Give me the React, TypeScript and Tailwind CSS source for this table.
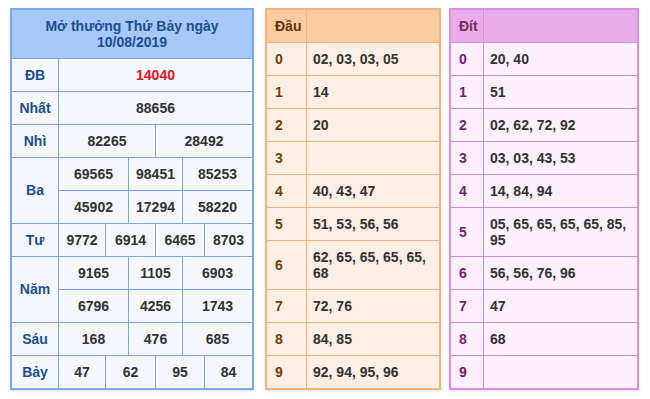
import React from 'react';

// left table: prize rows, each cell = [text, colSpan]
type Cell = [string, number];

const PRIZES: { label: string; rows: Cell[][]; red?: boolean }[] = [
    { label: 'ĐB', rows: [[['14040', 6]]], red: true },
    { label: 'Nhất', rows: [[['88656', 6]]] },
    { label: 'Nhì', rows: [[['82265', 3], ['28492', 3]]] },
    { label: 'Ba', rows: [[['69565', 2], ['98451', 2], ['85253', 2]], [['45902', 2], ['17294', 2], ['58220', 2]]] },
    { label: 'Tư', rows: [[['9772', 1], ['6914', 2], ['6465', 2], ['8703', 1]]] },
    { label: 'Năm', rows: [[['9165', 2], ['1105', 2], ['6903', 2]], [['6796', 2], ['4256', 2], ['1743', 2]]] },
    { label: 'Sáu', rows: [[['168', 2], ['476', 2], ['685', 2]]] },
    { label: 'Bảy', rows: [[['47', 1], ['62', 2], ['95', 2], ['84', 1]]] },
];

const SPAN: Record<number, string> = {
    1: 'col-span-1',
    2: 'col-span-2',
    3: 'col-span-3',
    6: 'col-span-6',
};

const DAU = ['02, 03, 03, 05', '14', '20', '', '40, 43, 47', '51, 53, 56, 56', '62, 65, 65, 65, 65, 68', '72, 76', '84, 85', '92, 94, 95, 96'];
const DIT = ['20, 40', '51', '02, 62, 72, 92', '03, 03, 43, 53', '14, 84, 94', '05, 65, 65, 65, 65, 85, 95', '56, 56, 76, 96', '47', '68', ''];

const ResultTable = () => (
    <div className="w-[244px] border-2 border-[#7ea7e8] bg-[#7ea7e8] shadow-sm">
        <div className="grid grid-cols-[46px_46px_22px_26px_26px_21px_47px] gap-px">
            <div className="col-span-7 h-[48px] bg-[#a5c8f8] flex flex-col items-center justify-center text-[#1d4f8f] leading-4">
                <span>Mở thưởng Thứ Bảy ngày</span>
                <span>10/08/2019</span>
            </div>
            {PRIZES.map(p => (
                <React.Fragment key={p.label}>
                    <div
                        className={`bg-[#f4f7fc] flex items-center justify-center text-[#1d4f8f] ${p.rows.length === 2 ? 'row-span-2' : ''}`}
                    >
                        {p.label}
                    </div>
                    {p.rows.map((row, ri) =>
                        row.map(([text, span], ci) => (
                            <div
                                key={`${ri}-${ci}`}
                                className={`${SPAN[span]} h-8 bg-[#f4f7fc] flex items-center justify-center ${p.red ? 'text-[#e3171b]' : 'text-[#333333]'}`}
                            >
                                {text}
                            </div>
                        ))
                    )}
                </React.Fragment>
            ))}
        </div>
    </div>
);

const LotoTable = ({ title, items, kind }: { title: string; items: string[]; kind: 'dau' | 'dit' }) => {
    const dau = kind === 'dau';
    return (
        <div className={dau ? 'w-[176px] border-2 border-[#f2b57d] bg-[#f2b57d] shadow-sm' : 'w-[190px] border-2 border-[#db90dc] bg-[#db90dc] shadow-sm'}>
            <div className={`grid gap-px ${dau ? 'grid-cols-[39px_132px]' : 'grid-cols-[32px_153px]'}`}>
                <div className={`px-2 py-2 leading-4 ${dau ? 'bg-[#fbcb9f] text-[#5c3511]' : 'bg-[#e8acea] text-[#7a2d5c]'}`}>{title}</div>
                <div className={dau ? 'bg-[#fbcb9f]' : 'bg-[#e8acea]'} />
                {items.map((v, i) => (
                    <React.Fragment key={i}>
                        <div className={`px-2 flex items-center ${dau ? 'bg-[#fdeee3] text-[#6e400d]' : 'bg-[#fdf0fd] text-[#7b1b7d]'}`}>{i}</div>
                        <div className={`pl-[6px] pr-1 py-2 leading-4 min-h-8 text-[#333333] ${dau ? 'bg-[#fdeee3]' : 'bg-[#fdf0fd]'}`}>{v}</div>
                    </React.Fragment>
                ))}
            </div>
        </div>
    );
};

export default function App() {
    return (
        <div className="min-h-screen bg-white pl-[10px] pt-2 font-['Liberation_Sans',Arial,sans-serif] text-[14px] font-bold">
            <div className="flex items-start">
                <ResultTable />
                <div className="ml-[11px]">
                    <LotoTable title="Đầu" items={DAU} kind="dau" />
                </div>
                <div className="ml-2">
                    <LotoTable title="Đít" items={DIT} kind="dit" />
                </div>
            </div>
        </div>
    );
}
